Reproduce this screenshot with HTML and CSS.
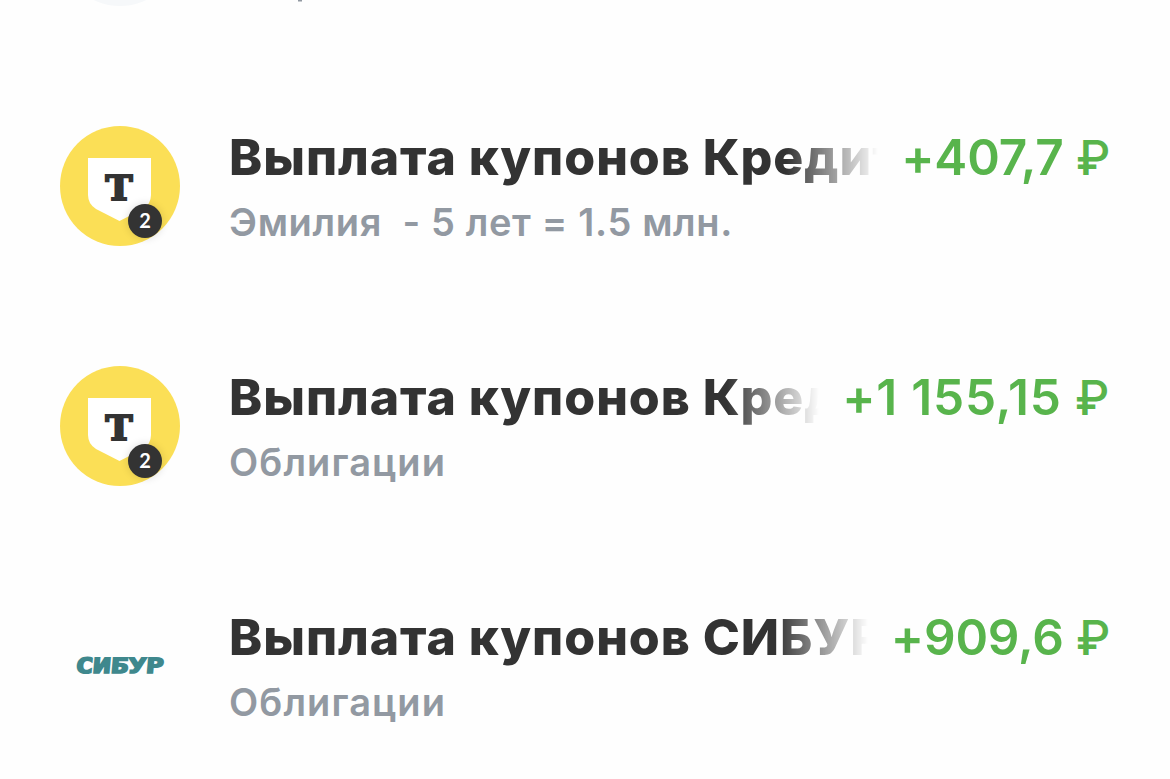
FILE: index.html
```
<!DOCTYPE html>
<html lang="ru">
<head>
    <meta charset="UTF-8">
    <meta name="viewport" content="width=device-width, initial-scale=1.0">
    <title>Операции</title>
    <link rel="stylesheet" href="styles.css">
</head>
<body>

    <!-- bottom edge of the row scrolled out of view -->
    <svg class="prev-row" viewBox="0 0 1170 66">
        <circle cx="120" cy="-54" r="60" fill="#f6f8fa"/>
        <rect x="298" y="0" width="4" height="1.5" fill="#9299a2"/>
    </svg>

    <div class="operations">
        <div class="operation">
            <div class="logo">
                <svg viewBox="0 0 120 120">
                    <circle cx="60" cy="60" r="60" fill="#fbdf56"/>
                    <path d="M28 32H91V69Q91 78 83 83L59.500 95L36 83Q28 78 28 69Z" fill="#fff"/>
                    <text class="logo-letter" x="45.500" y="74" textLength="27" lengthAdjust="spacingAndGlyphs">Т</text>
                </svg>
                <span class="badge">2</span>
            </div>
            <div class="info">
                <div class="line">
                    <div class="title">Выплата купонов Кредит</div>
                    <div class="amount">+407,7 <span class="rub">₽</span></div>
                </div>
                <div class="account">Эмилия&nbsp; - 5 лет = 1.5 млн.</div>
            </div>
        </div>

        <div class="operation">
            <div class="logo">
                <svg viewBox="0 0 120 120">
                    <circle cx="60" cy="60" r="60" fill="#fbdf56"/>
                    <path d="M28 32H91V69Q91 78 83 83L59.500 95L36 83Q28 78 28 69Z" fill="#fff"/>
                    <text class="logo-letter" x="45.500" y="74" textLength="27" lengthAdjust="spacingAndGlyphs">Т</text>
                </svg>
                <span class="badge">2</span>
            </div>
            <div class="info">
                <div class="line">
                    <div class="title">Выплата купонов Кред</div>
                    <div class="amount amount-long">+1 155,15 <span class="rub">₽</span></div>
                </div>
                <div class="account account-short">Облигации</div>
            </div>
        </div>

        <div class="operation">
            <div class="logo">
                <svg viewBox="0 0 120 120">
                    <text class="sibur" transform="translate(15 67) skewX(-5)" textLength="88" lengthAdjust="spacingAndGlyphs">СИБУР</text>
                </svg>
            </div>
            <div class="info">
                <div class="line">
                    <div class="title">Выплата купонов СИБУР</div>
                    <div class="amount">+909,6 <span class="rub">₽</span></div>
                </div>
                <div class="account account-short">Облигации</div>
            </div>
        </div>
    </div>

</body>
</html>
```

FILE: styles.css
```
* {
    margin: 0;
    padding: 0;
    box-sizing: border-box;
}
body {
    background: #fefefe;
    color: #333;
    font-family: Inter, sans-serif;
    overflow: hidden;
}
.prev-row {
    display: block;
    width: 1170px;
    height: 66px;
}
.operation {
    display: flex;
    align-items: center;
    height: 240px;
    padding: 0 60px 0 60px;
}
.logo {
    position: relative;
    flex: none;
    width: 120px;
    height: 120px;
    margin-right: 49px;
}
.logo svg {
    display: block;
    width: 120px;
    height: 120px;
}
.logo-letter {
    font-family: "DejaVu Serif", serif;
    font-weight: bold;
    font-size: 33px;
    fill: #333;
    stroke: #333;
    stroke-width: 2px;
}
.badge {
    position: absolute;
    left: 68px;
    top: 78px;
    width: 34px;
    height: 34px;
    border-radius: 50%;
    background: #333;
    color: #fff;
    font-family: Lato, sans-serif;
    font-size: 20px;
    font-weight: bold;
    line-height: 32px;
    text-align: center;
    box-shadow: 0 0 8px rgba(0,0,0,0.14);
}
.sibur {
    font-family: "DejaVu Sans Mono", monospace;
    font-size: 21px;
    font-weight: bold;
    fill: #3f888d;
    stroke: #3f888d;
    stroke-width: 1.6px;
}
.info {
    flex: 1;
    min-width: 0;
}
.line {
    display: flex;
    height: 64px;
    line-height: 62px;
    white-space: nowrap;
}
.title {
    flex: 1;
    min-width: 0;
    overflow: hidden;
    font-size: 50px;
    font-weight: 800;
    letter-spacing: 0.95px;
    -webkit-mask-image: linear-gradient(to left, transparent, #000 92px);
    mask-image: linear-gradient(to left, transparent, #000 92px);
}
.amount {
    margin-left: 23px;
    color: #58b44c;
    font-size: 49.5px;
    font-weight: 600;
    letter-spacing: -0.2px;
}
.amount-long {
    letter-spacing: 0.8px;
}
.rub {
    font-size: 48px;
    font-weight: 550;
}
.account {
    height: 56px;
    line-height: 64px;
    color: #9299a2;
    font-size: 38px;
    font-weight: 580;
    letter-spacing: 0.65px;
    white-space: nowrap;
}
.account-short {
    letter-spacing: 1.1px;
}
```
